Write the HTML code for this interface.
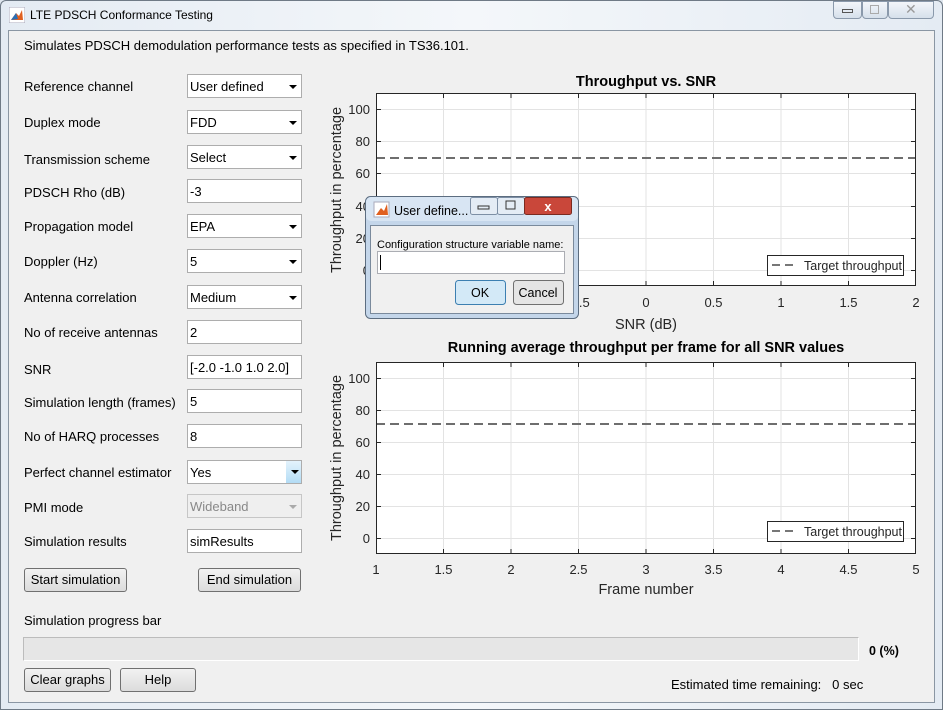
<!DOCTYPE html>
<html><head><meta charset="utf-8"><style>
*{box-sizing:border-box;margin:0;padding:0}
body{width:943px;height:710px;overflow:hidden;background:#dfe6ee;font-family:"Liberation Sans",Arial,sans-serif;font-size:13px;color:#000;position:relative}
.frame{position:absolute;left:0;top:0;width:943px;height:710px;background:linear-gradient(90deg,#e4ebf3,#f4f7fa 50%,#e4ebf3);border:1px solid #6f7a86;border-radius:6px 6px 0 0}
.title{position:absolute;left:30px;top:8px;font-size:12px;font-family:"Liberation Sans",sans-serif;color:#000}
.panel{position:absolute;left:8px;top:30px;width:927px;height:673px;background:#f0f0f0;border:1px solid #8a96a3}
.a{position:absolute;white-space:nowrap}
.l{font-size:13px}
.in{position:absolute;height:24px;width:115px;background:#fff;border:1px solid #adadad;padding:4px 2px;font-size:13px}
.dd{position:absolute;height:24px;width:115px;background:#fff;border:1px solid #adadad;padding:4px 2px;font-size:13px}
.dd:after{content:"";position:absolute;right:4px;top:10px;border-left:4px solid transparent;border-right:4px solid transparent;border-top:4px solid #000}
.btn{position:absolute;height:24px;background:linear-gradient(#f2f2f2,#dcdcdc);border:1px solid #707070;border-radius:3px;text-align:center;line-height:22px;font-size:13px}
.wb{position:absolute;top:1px;height:18px;border:1px solid #8a99ab;background:linear-gradient(#f3f6fa,#d6e0eb);border-radius:0 0 4px 4px}
</style></head><body>
<div class="frame"></div>
<svg class="a" style="left:9px;top:7px" width="16" height="16"><rect x="0" y="0" width="16" height="16" fill="#fff" stroke="#aab"/><path d="M2 13 L7 6 L10 9 L13 3 L14 13 Z" fill="#e06020"/><path d="M2 13 L7 6 L9 12Z" fill="#2a6fb5"/></svg>
<div class="title">LTE PDSCH Conformance Testing</div>
<div class="wb" style="left:833px;width:29px"></div>
<div class="wb" style="left:862px;width:26px"></div>
<div class="wb" style="left:888px;width:46px"></div>
<div class="a" style="left:842px;top:9px;width:11px;height:4px;border:1px solid #555"></div>
<div class="a" style="left:870px;top:5px;width:9px;height:9px;border:1px solid #aaa"></div>
<div class="a" style="left:905px;top:1px;font-size:14px;color:#999">✕</div>
<div class="panel"></div>
<div class="a l" style="left:24px;top:38px">Simulates PDSCH demodulation performance tests as specified in TS36.101.</div>

<div class="a l" style="left:24px;top:79px">Reference channel</div><div class="dd" style="left:187px;top:74px">User defined</div>
<div class="a l" style="left:24px;top:115px">Duplex mode</div><div class="dd" style="left:187px;top:110px">FDD</div>
<div class="a l" style="left:24px;top:152px">Transmission scheme</div><div class="dd" style="left:187px;top:145px">Select</div>
<div class="a l" style="left:24px;top:185px">PDSCH Rho (dB)</div><div class="in" style="left:187px;top:179px">-3</div>
<div class="a l" style="left:24px;top:219px">Propagation model</div><div class="dd" style="left:187px;top:214px">EPA</div>
<div class="a l" style="left:24px;top:254px">Doppler (Hz)</div><div class="dd" style="left:187px;top:249px">5</div>
<div class="a l" style="left:24px;top:290px">Antenna correlation</div><div class="dd" style="left:187px;top:285px">Medium</div>
<div class="a l" style="left:24px;top:325px">No of receive antennas</div><div class="in" style="left:187px;top:320px">2</div>
<div class="a l" style="left:24px;top:362px">SNR</div><div class="in" style="left:187px;top:355px">[-2.0 -1.0 1.0 2.0]</div>
<div class="a l" style="left:24px;top:395px">Simulation length (frames)</div><div class="in" style="left:187px;top:389px">5</div>
<div class="a l" style="left:24px;top:429px">No of HARQ processes</div><div class="in" style="left:187px;top:424px">8</div>
<div class="a l" style="left:24px;top:465px">Perfect channel estimator</div><div class="dd" style="left:187px;top:460px">Yes</div>
<div class="a" style="left:286px;top:461px;width:15px;height:22px;background:linear-gradient(#e4f3fc,#b3dcf5)"></div>
<div class="a" style="left:291px;top:470px;border-left:4px solid transparent;border-right:4px solid transparent;border-top:4px solid #000"></div>
<div class="a l" style="left:24px;top:500px">PMI mode</div><div class="a" style="left:187px;top:494px;width:115px;height:24px;background:#efefef;border:1px solid #c6c6c6;padding:4px 2px;color:#888;font-size:13px">Wideband</div>
<div class="a" style="left:289px;top:505px;border-left:4px solid transparent;border-right:4px solid transparent;border-top:4px solid #aaa"></div>
<div class="a l" style="left:24px;top:534px">Simulation results</div><div class="in" style="left:187px;top:529px">simResults</div>
<div class="btn" style="left:24px;top:568px;width:103px">Start simulation</div>
<div class="btn" style="left:198px;top:568px;width:103px">End simulation</div>
<div class="a l" style="left:24px;top:613px">Simulation progress bar</div>
<div class="a" style="left:23px;top:637px;width:836px;height:24px;background:#e6e6e6;border:1px solid #bcbcbc;border-bottom-color:#fff;border-right-color:#fff"></div>
<div class="a" style="left:869px;top:644px;font-weight:bold;font-size:12.5px">0 (%)</div>
<div class="btn" style="left:24px;top:668px;width:87px">Clear graphs</div>
<div class="btn" style="left:120px;top:668px;width:76px">Help</div>
<div class="a l" style="left:671px;top:677px">Estimated time remaining: &nbsp;&nbsp;0 sec</div>

<svg class="a" style="left:0;top:0" width="943" height="710" font-family="Liberation Sans, sans-serif">
<g id="p1">
<rect x="376" y="93" width="540" height="193" fill="#fff"/>
<g stroke="#e3e3e3" stroke-width="1">
<path d="M443.5 93V286M511 93V286M578.5 93V286M646 93V286M713.5 93V286M781 93V286M848.5 93V286"/>
<path d="M376 109.5H916M376 141.5H916M376 173.5H916M376 206.5H916M376 238.5H916M376 270.5H916"/>
</g>
<path d="M376 158H916" stroke="#6e6e6e" stroke-width="2" stroke-dasharray="9,5"/>
<rect x="376.5" y="93.5" width="539" height="192" fill="none" stroke="#262626"/>
<g stroke="#262626"><path d="M443.5 286v-5M511 286v-5M578.5 286v-5M646 286v-5M713.5 286v-5M781 286v-5M848.5 286v-5M443.5 93v5M511 93v5M578.5 93v5M646 93v5M713.5 93v5M781 93v5M848.5 93v5M376 109.5h5M376 141.5h5M376 173.5h5M376 206.5h5M376 238.5h5M376 270.5h5M916 109.5h-5M916 141.5h-5M916 173.5h-5M916 206.5h-5M916 238.5h-5M916 270.5h-5"/></g>
<g font-size="13" fill="#262626" text-anchor="end"><text x="370" y="114">100</text><text x="370" y="146">80</text><text x="370" y="178">60</text><text x="370" y="211">40</text><text x="370" y="243">20</text><text x="370" y="275">0</text></g>
<g font-size="13" fill="#262626" text-anchor="middle"><text x="376" y="307">-2</text><text x="443.5" y="307">-1.5</text><text x="511" y="307">-1</text><text x="578.5" y="307">-0.5</text><text x="646" y="307">0</text><text x="713.5" y="307">0.5</text><text x="781" y="307">1</text><text x="848.5" y="307">1.5</text><text x="916" y="307">2</text></g>
<text x="646" y="329" font-size="14.5" fill="#262626" text-anchor="middle">SNR (dB)</text>
<text x="646" y="86" font-size="14.5" font-weight="bold" text-anchor="middle">Throughput vs. SNR</text>
<text transform="translate(341,190) rotate(-90)" font-size="14.5" fill="#262626" text-anchor="middle">Throughput in percentage</text>
<rect x="767.5" y="255.5" width="136" height="20" fill="#fff" stroke="#262626"/>
<path d="M772 265H798" stroke="#262626" stroke-width="1.2" stroke-dasharray="8,5"/>
<text x="804" y="270" font-size="12.5" fill="#262626">Target throughput</text>
</g>
<g id="p2">
<rect x="376" y="362" width="540" height="192" fill="#fff"/>
<g stroke="#e3e3e3">
<path d="M443.5 362V554M511 362V554M578.5 362V554M646 362V554M713.5 362V554M781 362V554M848.5 362V554"/>
<path d="M376 378.5H916M376 410.5H916M376 442.5H916M376 474.5H916M376 506.5H916M376 538.5H916"/>
</g>
<path d="M376 424H916" stroke="#6e6e6e" stroke-width="2" stroke-dasharray="9,5"/>
<rect x="376.5" y="362.5" width="539" height="191" fill="none" stroke="#262626"/>
<g stroke="#262626"><path d="M443.5 554v-5M511 554v-5M578.5 554v-5M646 554v-5M713.5 554v-5M781 554v-5M848.5 554v-5M443.5 362v5M511 362v5M578.5 362v5M646 362v5M713.5 362v5M781 362v5M848.5 362v5M376 378.5h5M376 410.5h5M376 442.5h5M376 474.5h5M376 506.5h5M376 538.5h5M916 378.5h-5M916 410.5h-5M916 442.5h-5M916 474.5h-5M916 506.5h-5M916 538.5h-5"/></g>
<g font-size="13" fill="#262626" text-anchor="end"><text x="370" y="383">100</text><text x="370" y="415">80</text><text x="370" y="447">60</text><text x="370" y="479">40</text><text x="370" y="511">20</text><text x="370" y="543">0</text></g>
<g font-size="13" fill="#262626" text-anchor="middle"><text x="376" y="574">1</text><text x="443.5" y="574">1.5</text><text x="511" y="574">2</text><text x="578.5" y="574">2.5</text><text x="646" y="574">3</text><text x="713.5" y="574">3.5</text><text x="781" y="574">4</text><text x="848.5" y="574">4.5</text><text x="916" y="574">5</text></g>
<text x="646" y="594" font-size="14.5" fill="#262626" text-anchor="middle">Frame number</text>
<text x="646" y="352" font-size="14.5" font-weight="bold" text-anchor="middle">Running average throughput per frame for all SNR values</text>
<text transform="translate(341,458) rotate(-90)" font-size="14.5" fill="#262626" text-anchor="middle">Throughput in percentage</text>
<rect x="767.5" y="521.5" width="136" height="20" fill="#fff" stroke="#262626"/>
<path d="M772 531H798" stroke="#262626" stroke-width="1.2" stroke-dasharray="8,5"/>
<text x="804" y="536" font-size="12.5" fill="#262626">Target throughput</text>
</g>
<!-- dialog -->
<rect x="365.5" y="196.5" width="213" height="122" rx="5" fill="#c4d6ea" stroke="#5c6d80"/>
<rect x="366" y="197" width="212" height="24" rx="5" fill="#d8e5f3"/>
<rect x="370.5" y="225.5" width="203" height="88" fill="#f0f0f0" stroke="#7a8a9c"/>
<rect x="374" y="202" width="15" height="15" fill="#fff" stroke="#aab"/>
<path d="M376 215 L381 208 L384 211 L387 204 L388 215 Z" fill="#e06020"/>
<text x="394" y="215" font-size="12.5">User define...</text>
<rect x="470.5" y="197.5" width="27" height="17" rx="2" fill="#e4ecf5" stroke="#7d8fa5"/>
<rect x="478" y="206" width="11" height="3" fill="none" stroke="#333"/>
<rect x="497.5" y="197.5" width="27" height="17" rx="2" fill="#e4ecf5" stroke="#7d8fa5"/>
<rect x="506" y="201" width="9" height="8" fill="none" stroke="#333"/>
<rect x="524.5" y="197.5" width="47" height="17" rx="2" fill="#c9473a" stroke="#7a2a20"/>
<text x="548" y="211" font-size="13" fill="#fff" font-weight="bold" text-anchor="middle">x</text>
<text x="377" y="248" font-size="11">Configuration structure variable name:</text>
<rect x="377.5" y="251.5" width="187" height="22" fill="#fff" stroke="#abadb3"/>
<path d="M380.5 255V270" stroke="#000"/>
<rect x="455.5" y="280.5" width="50" height="24" rx="3" fill="#d3e9f7" stroke="#3c7fb1"/>
<text x="480" y="297" font-size="12.5" text-anchor="middle">OK</text>
<rect x="513.5" y="280.5" width="50" height="24" rx="3" fill="#e5e5e5" stroke="#707070"/>
<text x="538" y="297" font-size="12.5" text-anchor="middle">Cancel</text>
</svg>
</body></html>
